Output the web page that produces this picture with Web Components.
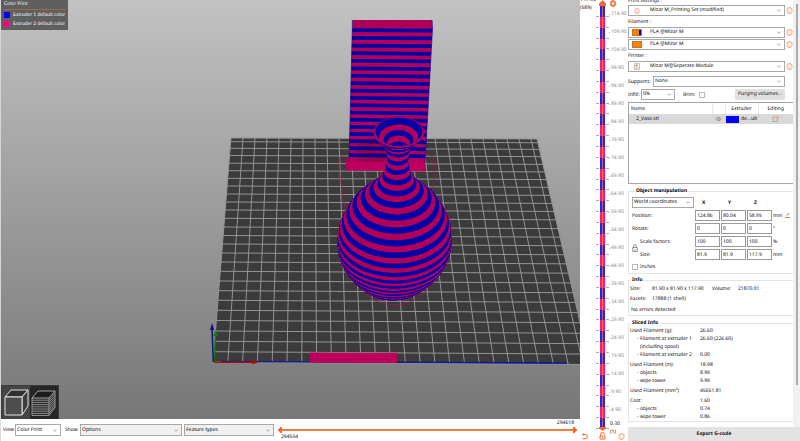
<!DOCTYPE html>
<html lang="en">
<head>
<meta charset="utf-8">
<title>Slicer preview</title>
<style>
html, body { margin: 0; height: 100%; }
body { font: 5px/8px "Noto Sans", "Open Sans", sans-serif; text-rendering: geometricPrecision; color: #0c0c0c; background: #fff; overflow: hidden; }
</style>
</head>
<body>
<slicer-app></slicer-app>
<script>
const BASE = `<style>
*,*::before,*::after{box-sizing:border-box}
button,input,select{font:inherit;color:inherit;margin:0;border-radius:0;text-rendering:inherit}
svg{display:block}
</style>`;

function define(name, html, setup) {
  const t = document.createElement('template');
  t.innerHTML = BASE + html;
  customElements.define(name, class extends HTMLElement {
    constructor() {
      super();
      this.attachShadow({ mode: 'open' }).append(t.content.cloneNode(true));
    }
    connectedCallback() { if (setup) setup(this, this.shadowRoot); }
  });
}

/* Gear, outlined */
define('gear-icon', `<style>:host{display:block;width:7px;height:7px;color:#e0966a}svg{width:100%;height:100%}path{stroke-width:var(--gw,1.5)}</style>
<svg viewBox="0 0 14 14" stroke="currentColor"><path d="M5.400 1h3.200l.5 1.700 1.700-.4 1.900 2.600-1.100 1.300v1.600l1.100 1.300-1.900 2.600-1.700-.4-.5 1.700H5.400l-.5-1.700-1.700.4-1.900-2.600 1.100-1.300V6.200l-1.100-1.300 1.900-2.600 1.700.4z" fill="#fdebdf"/></svg>`);

/* Drop-down with an optional leading icon */
define('drop-down', `<style>
:host{display:block;height:11px;min-width:0}
.box{display:flex;align-items:center;height:100%;border:1px solid #a8a8a8;background:var(--fill,#fff);padding:0 3px 0 1px}
select{flex:1;min-width:0;width:0;height:9px;line-height:9px;border:0;padding:0;background:none;appearance:none}
svg{width:4px;height:3px;flex:none}
</style>
<div class="box"><slot name="icon"></slot><select><option></option></select>
<svg viewBox="0 0 8 6" fill="none" stroke="#777" stroke-width="1.300"><path d="M.5 1 4 4.500 7.500 1"/></svg></div>`,
(el, r) => {
  r.querySelector('option').textContent = el.getAttribute('value');
  r.querySelector('select').setAttribute('aria-label', el.getAttribute('label'));
});

/* Titled group frame */
define('group-box', `<style>
:host{display:block}
fieldset{margin:0;min-width:0;border:1px solid #e4e4e4;border-right:0;padding:var(--pad,0 0 0 1px)}
legend{font-weight:bold;color:#000;line-height:8px;padding:0 1px;margin-left:var(--indent,1px)}
</style><fieldset><legend></legend><slot></slot></fieldset>`,
(el, r) => { r.querySelector('legend').textContent = el.getAttribute('title-text'); });

/* Color legend */
define('color-legend', `<style>
:host{display:block;width:67px;height:30px;background:#5f5f5f;color:#f4f4f4;padding:0 2px;font:5px/8px Lato,"Open Sans",sans-serif}
h2{font:inherit;margin:0;height:10px;border-bottom:1px solid #a5694a;padding-left:1px}
ul{list-style:none;margin:0;padding:1px 0 0 1px;display:grid;row-gap:1px}
li{display:flex;align-items:center;gap:3px;white-space:nowrap}
i{width:6px;height:6px;background:#00f}
li+li i{background:#ff0080}
</style><h2>Color Print</h2><ul><li><i></i>Extruder 1 default color</li><li><i></i>Extruder 2 default color</li></ul>`);

/* 3D / layers view switch */
define('view-switch', `<style>
:host{display:flex;height:34px;width:58px;background:#454545;border:1px solid #3a3a3a;border-bottom:0}
button{flex:1;border:0;background:none;padding:0;display:block}
button[aria-pressed=true]{background:#262626}
svg{width:100%;height:100%}
</style>
<button aria-label="3D editor view" aria-pressed="false"><svg viewBox="0 0 28 33" fill="none" stroke="#e4e4e4" stroke-linejoin="round"><path d="M3 11 9 4h17l-6 7z" fill="#303030"/><path d="M20 11l6-7v16l-6 9z" fill="#3d3d3d"/><path d="M3 11h17v18H3z" fill="#4d4d4d"/></svg></button>
<button aria-label="Preview" aria-pressed="true"><svg viewBox="0 0 28 33" fill="none" stroke="#a4a4a4" stroke-width=".8" stroke-linejoin="round"><path d="M2 12 8 5h17l-6 7z" fill="#1c1c1c" stroke="#c8c8c8"/><path d="M2 12v17.500h17v-17.500M19 29.500l6-8V5M2 14.200h17l6-7M2 16.400h17l6-7M2 18.600h17l6-7M2 20.800h17l6-7M2 23h17l6-7M2 25.200h17l6-7M2 27.400h17l6-7"/></svg></button>`);

/* Build plate with the sliced objects */
define('print-scene', `<style>
:host{display:block;position:relative;overflow:hidden;min-height:0;background:linear-gradient(#c2c2c2,#777);border-left:1px solid #d5d5d5}
.plate{width:100%;height:100%}
color-legend{position:absolute;left:0;top:0}
view-switch{position:absolute;left:0;bottom:0}
</style>
<svg class="plate" viewBox="1 0 579 419" preserveAspectRatio="xMinYMin slice" role="img" aria-label="Sliced vase and wipe tower on the print bed">
<defs><clipPath id="tower"><path d="M352.300 28h80.200L425 163.500l-76-2z"/></clipPath><clipPath id="rim"><ellipse cx="398.800" cy="131.700" rx="23.400" ry="14"/></clipPath></defs>
<path d="M231 138 537 139 590 364.500 213 362z" fill="#3b3b3b"/>
<path id="grid" fill="none" stroke="#949494" stroke-width="1"/>
<path d="M221 361.500 567 363" stroke="#1414a0" stroke-width="1.400"/>
<path d="M214 362.300h40" stroke="#a01010" stroke-width="1.500"/><path d="M252 360l6 2.300-6 2.200z" fill="#a01010"/>
<path d="M214 362 215.500 334" stroke="#118011" stroke-width="1.500"/><path d="M213 336l2.700-6 2 6z" fill="#118011"/>
<path d="M213.300 362 212 328" stroke="#10107c" stroke-width="1.500"/><path d="M210 330l2-7 2.300 7z" fill="#10107c"/>
<path d="M310 352.500l87 .5v10l-87-.5z" fill="#c4005f"/><path d="M310 355.500l87 1M310 359l87 .8" stroke="#9a0050" stroke-width=".6"/>
<path d="M346 154q-7 0-7 8 0 15 6 46M425 153q9 1 9.500 10 0 22-3.500 42M366 295q12 9 27 10 20 0 34-14" fill="none" stroke="#a8105a" stroke-width=".7"/>
<path d="M346 158h4l75 4v9.500l-79.500-1z" fill="#bd0060"/>
<path d="M352.500 20H432l.5 9-80.200-.5z" fill="#ae0058"/><path d="M356 27q3-5 9-6M378 27q3-3 8-6M400 27q8-3 13-5" fill="none" stroke="#8c0048" stroke-width=".8"/>
<g clip-path="url(#tower)"><path d="M340 20h100v150H340z" fill="#b20058"/><path id="stripes" fill="none" stroke="#0000a4" stroke-width="3.700"/><ellipse cx="372" cy="152" rx="16" ry="14" opacity=".12"/></g>
<path d="M352.300 20v8.500L349 161.500M432 20l.5 8.500L425 163" fill="none" stroke="#20108c" stroke-width=".7"/>
<g id="vase"></g>
<ellipse cx="398.800" cy="132.300" rx="25.200" ry="15.300" fill="#b00058" stroke="#5a0a80" stroke-width=".4"/>
<g clip-path="url(#rim)"><path d="M370 110h60v45h-60z" fill="#0000a4"/><ellipse cx="398.600" cy="137" rx="19.500" ry="12.500" fill="#b00058"/><ellipse cx="398.500" cy="140" rx="14.800" ry="10" fill="#0000a4"/><ellipse cx="398.500" cy="143" rx="11.500" ry="7.500" fill="#b00058"/><ellipse cx="398.500" cy="147" rx="9" ry="5.500" fill="#0000a4"/></g>
</svg>
<color-legend></color-legend><view-switch></view-switch>`,
(el, r) => {
  const rows = [138, 141.7, 148.3, 155.5, 163.2, 170.7, 178.3, 186, 194, 202, 210, 218.3, 227, 235.5, 244, 253, 262, 271.3, 281, 290.7, 300.3, 310.3, 320.5, 331, 341.3, 351.7, 362];
  let d = '';
  for (let i = 0; i <= 25; i++) d += `M${231 + 12 * i} ${138 + i * .04}L${213 + 14.8 * i} ${362 + i * .1}`;
  d += 'M537 139L590 364.5';
  for (const y of rows) {
    const t = (y - 138) / 224;
    d += `M${231 - 18 * t} ${y}L${537 + 53 * t} ${y + 1 + 1.5 * t}`;
  }
  r.getElementById('grid').setAttribute('d', d);

  let s = '', y = 30.2, step = 7.7;
  while (y < 161) { s += `M345 ${y}L436 ${y + .5 + (y - 30) * .008}`; y += step; step -= .045; }
  r.getElementById('stripes').setAttribute('d', s);

  const lookup = (table, h) => {
    let i = 1;
    while (i < table.length - 1 && table[i][0] < h) i++;
    const [a, va] = table[i - 1], [b, vb] = table[i];
    return va + (vb - va) * (h - a) / (b - a);
  };
  /* height in mm -> radius, and height in mm -> front edge of the ring */
  const radius = [[0, 35], [5, 42], [10, 47], [20, 53.5], [30, 56.7], [38, 57], [45, 55.5], [52, 51], [60, 43.5], [69, 31.5], [77, 20.5], [84, 14.5], [91, 11.5], [98, 10.5], [105, 13], [111, 18], [116, 24], [118, 25.3]];
  const front = [[0, 300.5], [7.5, 298], [13.5, 295.3], [19.5, 292], [25.5, 287.7], [31.5, 282.3], [37.5, 275.3], [43.5, 266.3], [49.5, 255.7], [55.5, 243.3], [61.5, 230.7], [67.5, 217.5], [73.5, 205], [79.5, 193.5], [85.5, 182.7], [91.5, 172.5], [97.5, 163.5], [103.5, 155.5], [111, 150], [118, 147.5]];
  let v = '';
  for (let h = 0; h <= 117.5; h += .5) {
    const rx = lookup(radius, h), ry = rx * (.68 - h * .0007);
    const cx = 393 + h * .048, cy = lookup(front, h) - ry;
    v += `<ellipse cx="${cx.toFixed(2)}" cy="${cy.toFixed(2)}" rx="${rx.toFixed(2)}" ry="${ry.toFixed(2)}" fill="${Math.floor(h / 3) % 2 ? '#b00058' : '#0000a6'}"/>`;
  }
  r.getElementById('vase').innerHTML = v;
});

/* Horizontal move slider */
define('move-slider', `<style>
:host{display:grid;grid-template-rows:8px 6px 8px;flex:1;min-width:0}
.hi{justify-self:end;padding-right:3px;line-height:8px}.lo{padding-left:3px}
.t{display:grid;align-items:center;background:linear-gradient(#f57a3c,#f57a3c) center/100% 2px no-repeat}
input{grid-area:1/1;width:100%;height:6px;appearance:none;background:none;pointer-events:none}
input::-webkit-slider-thumb{appearance:none;width:4px;height:6px;background:#f2692c;pointer-events:auto;clip-path:polygon(0 50%,60% 0,100% 0,100% 100%,60% 100%)}
input+input::-webkit-slider-thumb{clip-path:polygon(100% 50%,40% 0,0 0,0 100%,40% 100%)}
</style><span class="hi">294618</span><div class="t"><input type="range" aria-label="First move" value="0"><input type="range" aria-label="Last move" value="100"></div><span class="lo">294554</span>`);

define('view-bar', `<style>
:host{display:flex;height:22px;background:#fff;border-left:1px solid #ddd;padding-left:2px}
.c{display:flex;align-items:center;height:22px}
span{white-space:nowrap}
.v{width:46px;margin:0 4px 0 0}.s{width:102px;margin:0 2px 0 2px}.f{width:90px;margin-right:4px}
.s,.f{--fill:#f1f1f1}
.l{width:12px}.w{width:13px}
drop-down{height:12px}
move-slider{margin-right:3px}
</style>
<div class="c"><span class="l">View</span><drop-down class="v" label="View" value="Color Print"></drop-down><span class="w">Show</span><drop-down class="s" label="Show" value="Options"></drop-down><drop-down class="f" label="Feature types" value="Feature types"></drop-down></div><move-slider></move-slider>`);

/* Vertical layer slider */
define('layer-rail', `<style>
:host{display:grid;grid-template-columns:16px 13px 1fr;background:#fff}
.a,.b,.z{display:flex;flex-direction:column;min-height:0;min-width:0}
.a p{margin:0;height:4px;display:flex;align-items:end;justify-content:end;overflow:hidden}
.a p+p{height:8px;justify-content:start;overflow:visible}
.a svg{width:7px;height:7px;margin:auto 0 1px 1px}
.track{flex:1;min-height:0;display:grid}
ol{grid-area:1/1;list-style:none;margin:6px 0 2px;padding:0;display:flex;flex-direction:column;min-height:0}
ol li{flex:1;display:grid;grid-template-columns:3px 5px 3px;justify-content:space-between}
ol li::before,ol li::after{content:"";border-bottom:1px solid #aaa}
ol i{background:linear-gradient(90deg,#22f 2px,#c06060 2px 3px,#22f 3px)}
ol li:nth-child(even) i{background:linear-gradient(90deg,#ff1686 2px,#f4704a 2px 3px,#ff1686 3px)}
input{grid-area:1/1;writing-mode:vertical-lr;direction:rtl;width:13px;height:100%;min-height:0;appearance:none;background:none;pointer-events:none}
input::-webkit-slider-thumb{appearance:none;width:7px;height:6px;background:#f2692c;pointer-events:auto;clip-path:polygon(50% 0,100% 60%,100% 100%,0 100%,0 60%)}
input.lo::-webkit-slider-thumb{height:4px;clip-path:polygon(50% 100%,100% 40%,100% 0,0 0,0 40%)}
.b svg{width:7px;height:8px;margin:1px 3px 1px}
ul{flex:1;list-style:none;margin:0 0 5px;padding:0;display:flex;flex-direction:column;justify-content:space-between;color:#888}
ul li{height:9px;line-height:9px;display:flex;align-items:center;gap:1px}
ul li::before{content:"";width:1px;height:1px;background:#bbb}
.z gear-icon.t{color:#f2692c;--gw:3;width:6px;margin:0 0 3px 1px}
.n{height:8px;padding-left:1px}
.e{height:13px;display:flex;justify-content:space-between;padding:0 2px 0 1px}.e gear-icon{align-self:end;margin-bottom:1px}
</style>
<div class="a"><p>117.90</p><p>(589)</p><svg viewBox="0 0 14 14" fill="none" stroke="#f2692c" stroke-width="2"><path d="M4 3h4.500a4 4 0 0 1 0 8.500H3"/><path d="M6 .5 3 3l3 2.800" stroke-width="1.500"/></svg></div>
<div class="b"><div class="track"><ol></ol><input class="hi" type="range" aria-label="Top layer" value="100"><input class="lo" type="range" aria-label="Bottom layer" value="0"></div>
<svg viewBox="0 0 14 16" fill="none" stroke="#f2692c" stroke-width="2"><path d="M3 8V5a4 4 0 0 1 8 0"/><path d="M2 8h10v6H2zM7 10v2"/></svg></div>
<div class="z"><gear-icon class="t"></gear-icon><ul></ul><div class="n">0.30</div><div class="e">(1)<gear-icon></gear-icon></div></div>`,
(el, r) => {
  r.querySelector('ol').innerHTML = '<li><i></i></li>'.repeat(39);
  let s = '';
  for (let v = 114.9; v > 4; v -= 5) s += `<li>${v.toFixed(2)}</li>`;
  r.querySelector('ul').innerHTML = s;
});

/* Presets */
define('preset-panel', `<style>
:host{display:block;width:165px}
.p{display:grid;grid-template-columns:1fr 7px;column-gap:1px;row-gap:1px;align-items:center}
h3{font:inherit;margin:0;line-height:8px;height:11px;padding-top:2px}
h3.top{height:5px;padding:0;display:flex;align-items:end;overflow:hidden;line-height:7px}
.ic{width:20px;display:flex}.ic gear-icon{width:6px;height:6px;margin-left:4px}
.sw{width:10px;height:7px;background:#ff8000;border:1px solid #b87838;margin-left:2px}
.two{background:linear-gradient(90deg,#ff8000 70%,#0000d0 70%)}
.ic svg{width:6px;height:7px;margin-left:4px}
.row{display:flex;align-items:center;margin-right:8px;height:11px;white-space:nowrap}
.sup{margin-top:4px;margin-bottom:2px}
.sup drop-down{flex:1}.sup span{width:25px}
.inf span{width:13px}.inf drop-down{width:34px}
label{display:flex;align-items:center;gap:3px;margin-left:8px}
input{appearance:none;width:6px;height:6px;border:1px solid #bbb;background:#fff}
button{margin-left:auto;width:50px;height:11px;border:0;background:#e0e0e0;padding:0;line-height:11px}
</style>
<h3 class="top">Print settings :</h3>
<div class="p"><drop-down label="Print settings" value="Mizar M_Printing Set (modified)"><span slot="icon" class="ic"><gear-icon></gear-icon></span></drop-down><gear-icon></gear-icon></div>
<h3>Filament :</h3>
<div class="p"><drop-down label="Filament 1" value="PLA @Mizar M"><span slot="icon" class="ic"><i class="sw two"></i></span></drop-down><gear-icon></gear-icon>
<drop-down label="Filament 2" value="PLA @Mizar M"><span slot="icon" class="ic"><i class="sw"></i></span></drop-down><gear-icon></gear-icon></div>
<h3>Printer :</h3>
<div class="p"><drop-down label="Printer" value="Mizar M@Seperate Module"><span slot="icon" class="ic"><svg viewBox="0 0 12 14" fill="#fff" stroke="#888"><path d="M1 1h10v12H1z"/><path d="M1 10h10" /><path d="M3 3h4v4H3z" fill="#f2692c" stroke="none"/></svg></span></drop-down><gear-icon></gear-icon></div>
<div class="row sup"><span>Supports:</span><drop-down label="Supports" value="None"></drop-down></div>
<div class="row inf"><span>Infill:</span><drop-down label="Infill" value="0%"></drop-down><label>Brim: <input type="checkbox"></label><button>Purging volumes...</button></div>`);

define('object-list', `<style>
:host{display:block;width:165px;height:82px;border:1px solid #a4a4a4;border-right:0;background:#fff}
table{border-collapse:collapse;table-layout:fixed;width:100%}
th,td{font-weight:normal;padding:0 0 0 2px;text-align:left;height:11px;line-height:8px;white-space:nowrap;overflow:hidden}
th{border-right:1px solid #e8e8e8}th:last-child{border:0}
td{background:#d9d9d9;height:10px}
td:first-child{padding-left:7px}
.c{text-align:center;padding:0}
.c svg{margin:auto;width:7px;height:6px}
td.k{padding-left:1px}
.x{display:flex;align-items:center;gap:2px}.x i{width:13px;height:7px;background:#00f}
</style><table><colgroup><col style="width:83px"><col style="width:13px"><col style="width:33px"><col></colgroup>
<thead><tr><th>Name</th><th></th><th class="c">Extruder</th><th class="c">Editing</th></tr></thead>
<tbody><tr><td>2_Vase.stl</td><td class="c"><svg viewBox="0 0 14 10" fill="none" stroke="#808080" stroke-width="1.300"><path d="M1 5q6-7 12 0-6 7-12 0z"/><circle cx="7" cy="5" r="2"/></svg></td><td class="k"><div class="x"><i></i>de...ult</div></td><td class="c"><svg viewBox="0 0 14 12" fill="none" stroke="#888" stroke-width="1.200"><path d="M7 2H2v9h9V8"/><path d="M11 8V5" stroke="#f2692c"/><circle cx="11" cy="3" r="2" stroke="#f2692c"/></svg></td></tr></tbody></table>`);

define('object-manipulation', `<style>
:host{display:block}
group-box{--indent:3px;--pad:0 0 0 3px}
.g{display:grid;grid-template-columns:62px 25px 25px 25px auto;column-gap:1px;row-gap:2px;align-items:center;justify-content:start;margin-top:2px}
.g b{padding-left:7px;color:#000}
.g input{width:25px;height:11px;border:1px solid #999;padding:0 0 0 1px;background:#fff;line-height:8px}
.sub{display:grid;grid-template-columns:8px 1fr;grid-row:4/6;row-gap:5px;align-items:center}
.sub svg{grid-row:1/3;width:6px;height:8px}
.u{display:flex;align-items:center;gap:3px}
.u svg{width:5px;height:5px}
label{display:flex;align-items:center;gap:2px;height:13px}
label input{appearance:none;width:6px;height:6px;border:1px solid #bbb;margin:0}
</style><group-box title-text="Object manipulation"><div class="g">
<drop-down label="Coordinate system" value="World coordinates"></drop-down><b>X</b><b>Y</b><b>Z</b><span></span>
<span>Position:</span><input aria-label="Position X" value="124.86"><input aria-label="Position Y" value="80.04"><input aria-label="Position Z" value="58.95"><span class="u">mm <svg viewBox="0 0 10 10" fill="none" stroke-width="1.800"><path d="M0 9h10" stroke="#f2692c"/><path d="M2 6 7 2M4.500 1.500H8v3" stroke="#888" stroke-width="1.200"/></svg></span>
<span>Rotate:</span><input aria-label="Rotate X" value="0"><input aria-label="Rotate Y" value="0"><input aria-label="Rotate Z" value="0"><span>°</span>
<div class="sub"><svg viewBox="0 0 12 16" fill="none" stroke="#777" stroke-width="1.600"><path d="M3 7V4.500a3 3 0 0 1 6 0V7M1.500 7h9v8h-9zM6 10v3"/></svg><span>Scale factors:</span><span>Size:</span></div>
<input aria-label="Scale X" value="100"><input aria-label="Scale Y" value="100"><input aria-label="Scale Z" value="100"><span>%</span>
<input aria-label="Size X" value="81.9"><input aria-label="Size Y" value="81.9"><input aria-label="Size Z" value="117.9"><span>mm</span>
</div><label><input type="checkbox">Inches</label></group-box>`);

define('object-info', `<style>
:host{display:block}
dl{margin:0;display:grid;grid-template-columns:22px 60px 26px 1fr;row-gap:2px;padding-top:1px;white-space:nowrap}
dd{margin:0}p{margin:3px 0 1px 1px}
</style><group-box title-text="Info"><dl><dt>Size:</dt><dd>81.90 x 81.90 x 117.90</dd><dt>Volume:</dt><dd>21870.01</dd><dt>Facets:</dt><dd>17888 (1 shell)</dd></dl><p>No errors detected</p></group-box>`);

define('sliced-info', `<style>
:host{display:block}
table{border-collapse:collapse}
th,td{font-weight:normal;text-align:left;padding:0;line-height:8px;vertical-align:top;white-space:nowrap}
th{width:70px}
.s th{padding-left:7px}.s span{display:block;padding-left:3px}
.h>*{padding-top:2px}
</style><group-box title-text="Sliced Info"><table>
<tr><th>Used Filament (g):</th><td>26.60</td></tr>
<tr class="s"><th>- Filament at extruder 1<span>(including spool)</span></th><td>26.60 (226.60)</td></tr>
<tr class="s"><th>- Filament at extruder 2</th><td>0.00</td></tr>
<tr class="h"><th>Used Filament (m):</th><td>18.98</td></tr>
<tr class="s"><th>- objects</th><td>8.99</td></tr><tr class="s"><th>- wipe tower</th><td>9.99</td></tr>
<tr class="h"><th>Used Filament (mm³)</th><td>45651.81</td></tr>
<tr class="h"><th>Cost:</th><td>1.60</td></tr>
<tr class="s"><th>- objects</th><td>0.74</td></tr><tr class="s"><th>- wipe tower</th><td>0.86</td></tr>
</table></group-box>`);

define('side-bar', `<style>
:host{display:grid;grid-template-rows:1fr auto;padding-left:1px;min-height:0;background:#fff}
.body{display:grid;grid-template-columns:165px 1fr;min-height:0;overflow:hidden}
.col{display:flex;flex-direction:column}
object-list{margin-top:2px}
object-manipulation{margin-top:3px}
object-info{margin-top:2px}
sliced-info{margin-top:3px}
.bar{background:#f1f1f1;padding:4px 0 42px}
.bar i{display:block;width:2px;height:100%;margin:0 auto;background:#aaa}
button{height:14px;border:0;background:#e3e3e3;font-weight:bold;color:#111;padding:0;line-height:14px}
</style><div class="body"><div class="col"><preset-panel></preset-panel><object-list></object-list><object-manipulation></object-manipulation><object-info></object-info><sliced-info></sliced-info></div><div class="bar"><i></i></div></div><button>Export G-code</button>`);

define('slicer-app', `<style>
:host{display:grid;grid-template-columns:minmax(0,1fr) 47px 173px;height:100vh}
main{display:grid;grid-template-rows:minmax(0,1fr) auto;min-height:0}
</style><main><print-scene></print-scene><view-bar></view-bar></main><layer-rail></layer-rail><side-bar></side-bar>`);
</script>
</body>
</html>
